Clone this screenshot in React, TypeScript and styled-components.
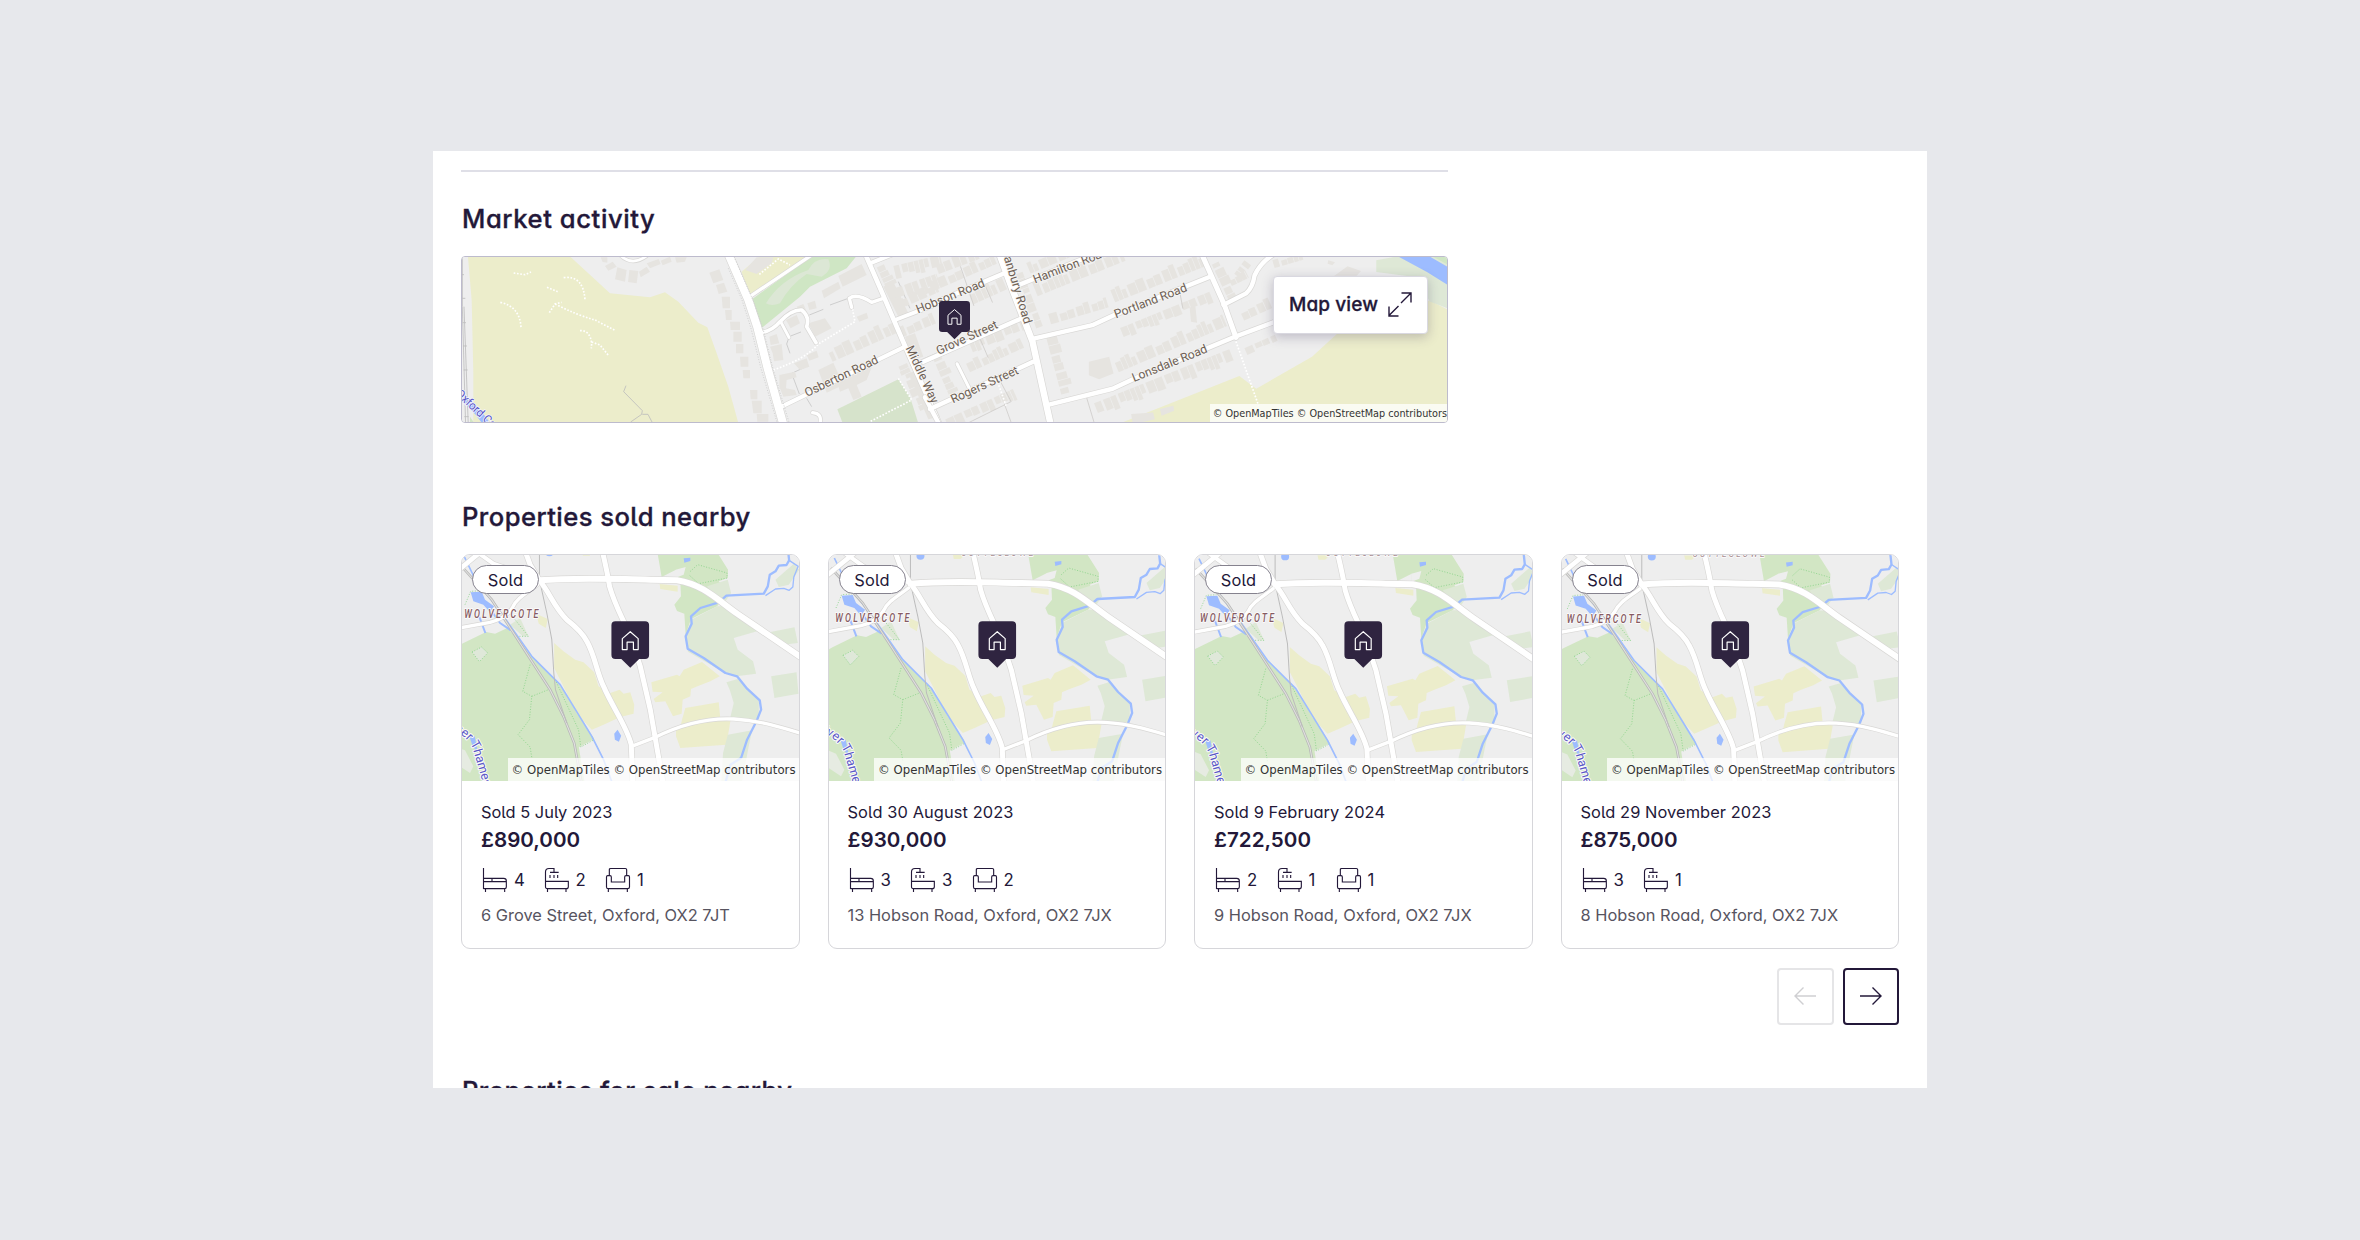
import React from "react";
import styled, { createGlobalStyle } from "styled-components";

const ink = "#231839";
const sans = `Inter, "Open Sans", "Liberation Sans", sans-serif`;

const GlobalStyle = createGlobalStyle`
  * { box-sizing: border-box; }
  body { margin: 0; background: #e7e8ec; }
`;

const Page = styled.main`
  width: 2360px;
  height: 1240px;
  padding-top: 151px;
  display: flex;
  justify-content: center;
  align-items: flex-start;
  background: #e7e8ec;
  color: ${ink};
  font-family: ${sans};
  font-feature-settings: "cv11" 1, "cv05" 1;
  overflow: hidden;
`;

const Panel = styled.div`
  width: 1494px;
  height: 937px;
  padding: 19px 28px 0;
  background: #fff;
  overflow: hidden;
  display: flex;
  flex-direction: column;
`;

const Divider = styled.hr`
  width: 987px;
  height: 2px;
  margin: 0;
  border: 0;
  flex: none;
  background: #dfdfe7;
`;

const Heading = styled.h2<{ $top: number; $track: number }>`
  margin: ${(p) => p.$top}px 0 0 1px;
  height: 36px;
  flex: none;
  font-size: 25.6px;
  line-height: 36px;
  font-weight: 500;
  letter-spacing: ${(p) => p.$track}px;
  -webkit-text-stroke: 0.35px ${ink};
  white-space: nowrap;
`;

const MapFrame = styled.div`
  position: relative;
  width: 987px;
  height: 167px;
  margin-top: 19px;
  flex: none;
  border: 1px solid #bdbbcd;
  border-radius: 4px;
  overflow: hidden;
`;

const MapDrawing = styled.svg`
  display: block;
  width: 100%;
  height: 100%;
`;

const MapButton = styled.button`
  position: absolute;
  top: 19px;
  right: 19px;
  width: 155px;
  height: 58px;
  padding: 0 15px 1px 15px;
  display: flex;
  align-items: center;
  justify-content: space-between;
  border: 1px solid #d9d8e0;
  border-radius: 4px;
  background: #fff;
  color: ${ink};
  font: 500 19px ${sans};
  font-feature-settings: inherit;
  letter-spacing: 0.1px;
  -webkit-text-stroke: 0.3px ${ink};
  white-space: nowrap;
  box-shadow: 0 3px 12px rgba(60, 50, 90, 0.28);
`;

const Attribution = styled.div<{ $large?: boolean }>`
  position: absolute;
  right: 0;
  bottom: 0;
  height: ${(p) => (p.$large ? 23 : 18)}px;
  padding: 0 ${(p) => (p.$large ? "3px 0 4px" : "0 0 3px")};
  line-height: ${(p) => (p.$large ? 25 : 19)}px;
  font-family: "DejaVu Sans", sans-serif;
  font-size: ${(p) => (p.$large ? 11.72 : 9.68)}px;
  color: #333;
  background: rgba(255, 255, 255, 0.75);
  white-space: nowrap;
`;

const CardRow = styled.div`
  display: grid;
  grid-template-columns: repeat(4, 338.5px);
  column-gap: 28px;
  margin-top: 19px;
  flex: none;
`;

const Card = styled.article`
  height: 395px;
  border: 1.4px solid #d6d6da;
  border-radius: 9px;
  overflow: hidden;
  background: #fff;
`;

const CardMap = styled.div`
  position: relative;
  height: 226px;
`;

const Badge = styled.span`
  position: absolute;
  left: 10px;
  top: 10px;
  width: 67px;
  height: 29px;
  border: 1px solid #85828e;
  border-radius: 15px;
  background: #fff;
  font-size: 16.4px;
  line-height: 28px;
  text-align: center;
  letter-spacing: 0.2px;
`;

const CardBody = styled.div`
  padding: 19px 19px 0;
  display: flex;
  flex-direction: column;
`;

const SoldDate = styled.p<{ $track: number }>`
  margin: 0;
  height: 25px;
  line-height: 25px;
  font-size: 16.4px;
  letter-spacing: ${(p) => p.$track}px;
  white-space: nowrap;
`;

const Price = styled.p`
  margin: 0;
  height: 30px;
  line-height: 30px;
  font-size: 20.6px;
  font-weight: 600;
`;

const Features = styled.ul`
  list-style: none;
  margin: 13px 0 0 2px;
  padding: 0;
  display: flex;
  gap: 20.5px;
  height: 25px;
`;

const Feature = styled.li`
  display: flex;
  gap: 7px;
  font-size: 16.8px;
  line-height: 25px;
`;

const Count = styled.span<{ $narrow: boolean }>`
  width: ${(p) => (p.$narrow ? 7.6 : 10)}px;
`;

const FeatureIcon = styled.svg`
  display: block;
  width: 24px;
  height: 24px;
  flex: none;
  overflow: visible;
`;

const Address = styled.p`
  margin: 10px 0 0;
  height: 25px;
  line-height: 25px;
  font-size: 16.4px;
  color: #57545f;
  white-space: nowrap;
`;

const Pager = styled.div`
  display: flex;
  justify-content: flex-end;
  gap: 9px;
  margin-top: 19px;
  flex: none;
`;

const PagerButton = styled.button<{ $off?: boolean }>`
  width: 56.5px;
  height: 56.5px;
  padding: 0;
  display: flex;
  align-items: center;
  justify-content: center;
  border: 2px solid ${(p) => (p.$off ? "#e5e5e7" : ink)};
  border-radius: 4px;
  background: #fff;
  color: ${(p) => (p.$off ? "#cfcfd2" : ink)};
`;

const C = {
  land: "#eeeeee",
  sand: "#ecedcb",
  park: "#d2e6c4",
  meadow: "#dee8d6",
  water: "#9dbcff",
  casing: "#d9d8d6",
  building: "#e6e4e0",
  rail: "#bdbdbd",
};

type Road = [string, number];

function Roads({ list }: { list: Road[] }) {
  return (
    <g fill="none" strokeLinejoin="round" strokeLinecap="round">
      {list.map(([d, w]) => (
        <path key={"c" + d} d={d} stroke={C.casing} strokeWidth={w + 4} />
      ))}
      {list.map(([d, w]) => (
        <path key={"f" + d} d={d} stroke="#fff" strokeWidth={w} />
      ))}
    </g>
  );
}

function Pin({ x, y, size }: { x: number; y: number; size: number }) {
  return (
    <g transform={`translate(${x} ${y}) scale(${size / 38})`}>
      <path
        d="M-15 0H15Q19 0 19 4V34Q19 38 15 38H9L0 47L-9 38H-15Q-19 38-19 34V4Q-19 0-15 0Z"
        fill="#2f2440"
      />
      <path
        d="M-8 17.5L0 10.5L8 17.5V28.5H3.2V21H-3.2V28.5H-8Z"
        fill="none"
        stroke="#fff"
        strokeWidth="1.2"
        strokeLinejoin="round"
      />
    </g>
  );
}

/* x1, y1, x2, y2, offset from the line (negative is above it), depth */
type Row = [number, number, number, number, number, number];

function Houses({ rows }: { rows: Row[] }) {
  const out: React.ReactNode[] = [];
  rows.forEach(([x1, y1, x2, y2, off, depth], r) => {
    const len = Math.hypot(x2 - x1, y2 - y1);
    const ang = (Math.atan2(y2 - y1, x2 - x1) * 180) / Math.PI;
    let t = 0;
    let i = 0;
    while (t < len) {
      const k = (i * 7 + r * 5) % 11;
      const w = 13 + (k % 4) * 4;
      const h = depth * (0.65 + (k % 5) * 0.09);
      out.push(
        <rect
          key={r + "-" + i}
          x={t}
          y={off < 0 ? off - h : off}
          width={Math.min(w, len - t)}
          height={h}
          transform={`translate(${x1} ${y1}) rotate(${ang})`}
        />
      );
      t += w + (k % 3 === 0 ? 7 : 2);
      i++;
    }
  });
  return <g fill={C.building}>{out}</g>;
}

function RoadName(p: { x: number; y: number; a: number; len: number; children: string }) {
  return (
    <text
      transform={`translate(${p.x} ${p.y}) rotate(${p.a})`}
      textLength={p.len}
      lengthAdjust="spacingAndGlyphs"
      fontFamily="Roboto, sans-serif"
      fontSize="12.2"
      fill="#6d5f55"
      stroke="#f6f5f3"
      strokeWidth="1.6"
      paintOrder="stroke"
    >
      {p.children}
    </text>
  );
}

const westRoads: Road[] = [
  ["M985 473L1175 345", 10],
  ["M1015 580Q1055 575 1080 545Q1115 508 1145 510Q1170 530 1160 560L1188 608", 11],
  ["M1082 545L1107 592", 9],
  ["M1350 370L1420 342", 12],
  ["M1425 540L1560 488", 12],
  ["M1390 475L1355 487Q1310 458 1288 475L1295 502", 10],
  ["M1080 802L1455 620", 12],
  ["M1500 668L1580 634", 12],
  ["M1178 818Q1207 820 1200 850", 10],
  ["M600 345Q635 380 680 348", 8],
  ["M1335 340L1385 455L1455 618L1560 855", 14],
  ["M922 335L985 480L1012 562L1042 682L1092 860", 24],
];

const eastRoads: Road[] = [
  ["M-20 200L225 96", 13],
  ["M250 138L560 12", 13],
  ["M300 293L480 252L545 222L830 108", 13],
  ["M355 486L540 440L600 412L900 287L1030 238", 13],
  ["M-20 360L275 230", 13],
  ["M0 500L305 360", 13],
  ["M80 366L116 438", 9],
  ["M868 192L935 158Q955 140 960 105Q978 65 1020 40", 13],
  ["M-15 465L35 560", 13],
  ["M803 40L870 190L905 288", 15],
  ["M203 35L245 150L303 300L360 560", 19],
];

function StreetMap() {
  return (
    <MapDrawing viewBox="462 257 985 165" preserveAspectRatio="none">
      <rect x="460" y="255" width="990" height="170" fill={C.land} />
      <g transform="translate(420 140) scale(.33333)">
        <path
          d="M143 340L440 340L570 460L690 472L735 457L775 485L835 548L862 562L890 640L925 740L958 860H160V700L155 480Z"
          fill={C.sand}
        />
        <path d="M965 395L1030 340H1180L985 468Z" fill={C.sand} />
        <path d="M975 390L1010 352H1060L1055 370L1010 402Z" fill={C.building} />
        <path d="M990 482L1180 345H1312L1280 385L1170 440L1140 470L1020 568Z" fill="#cfe6c4" />
        <path
          d="M1038 490Q1080 420 1165 390Q1185 352 1225 358Q1240 390 1205 410L1160 402Q1110 435 1080 490Q1055 500 1038 490Z"
          fill="#dce7d5"
        />
        <path d="M1252 808L1435 718L1470 770L1498 860H1272Z" fill="#d6e3cb" />
        <path d="M150 830L170 860H150Z" fill={C.park} />
        <path d="M130 775Q170 805 205 860" fill="none" stroke={C.water} strokeWidth="20" />
        <g fill="none" stroke={C.rail} strokeWidth="2.5">
          <path d="M127 350V500L137 860M132 500L145 860M126 404H132M127 475H136M128 548H138M129 618H141M131 690H143M133 830H146" />
          <path d="M618 737L611 755L667 812L665 823L632 846M667 823H684L697 848" />
          <path d="M1168 525L1210 508M1112 588L1143 576M1107 592L1100 612L1110 640M1435 425L1470 505M1230 495L1285 475M1138 762L1115 700L1152 683M1160 775L1175 800" strokeWidth="2" />
        </g>
        <g fill={C.building}>
          <path d="M592 382L620 390L615 425L585 418ZM628 390L655 393L650 430L624 426ZM657 395L680 380L690 395L662 412ZM680 370L716 357L722 372L690 385ZM722 362L750 350L755 365L728 376ZM555 378L578 365L590 380L565 392ZM542 352H562V368L548 366ZM765 352H800L795 365L770 368Z" />
          <path d="M868 398L898 388L910 420L880 430ZM888 435L912 428L922 455L896 462ZM905 470H930V505H908ZM915 510H935V540H918ZM930 545H960V570H932ZM940 575H965V605H940ZM948 612H970V640H948ZM960 650H985V680H962ZM968 690H990V715H970ZM990 750H1012V778H992ZM995 782H1025V820H1000ZM1010 822H1045V845H1012Z" />
          <path d="M1130 500L1150 492L1158 510L1140 520ZM1162 490L1185 482L1190 505L1168 510ZM1165 550L1215 535L1235 565L1185 590ZM1048 590L1070 582L1078 610L1052 615ZM1050 620L1085 612L1090 660L1062 664L1058 640ZM1098 540L1130 525L1140 550L1112 565ZM1205 452L1255 425L1262 445L1212 475ZM1255 408L1325 372L1340 405L1268 440ZM1310 530L1340 518L1345 535L1318 545Z" />
          <path d="M1078 705L1125 695L1130 712L1100 720L1098 745L1125 750L1130 765L1090 770L1078 740ZM1122 670L1160 655L1168 680L1140 690ZM1160 645L1190 632L1196 652L1168 662ZM1250 720L1360 670L1340 720L1310 735L1325 770L1300 780L1285 745L1260 755Z" />
          <path d="M1195 690L1240 668L1270 735L1220 758ZM1465 700L1495 690L1560 830L1525 838ZM1455 590L1485 580L1510 650L1475 660ZM1390 440L1420 425L1465 520L1435 530Z" />
        </g>
        <Houses
          rows={[
            [1240, 670, 1440, 580, -5, 45],
            [1365, 385, 1430, 530, -6, 36],
            [1400, 440, 1545, 390, 12, 40],
            [1445, 510, 1560, 460, -5, 35],
            [1420, 378, 1560, 345, 0, 40],
            [1440, 600, 1550, 555, -5, 35],
            [1470, 665, 1530, 800, 10, 30],
          ]}
        />
        <g fill="none" stroke="#fff" strokeWidth="5" strokeDasharray="5 5">
          <path d="M281 399L315 404L333 396M431 413Q490 405 495 480M381 442L413 455M241 487Q300 500 303 563M388 518L405 492L425 487M405 492Q470 525 525 540L585 571M480 572Q510 570 515 610L514 625M515 606L540 615L566 647" />
          <path d="M1018 403L1075 357L1110 375M1060 690Q1160 655 1195 612L1305 545L1297 505M1435 715L1475 780L1350 845" />
        </g>
        <Roads list={westRoads} />
        <path
          d="M942 350L1003 490L1030 570L1060 690L1108 850M925 385L966 480L993 565L1022 682L1072 850"
          fill="none"
          stroke="#cfcfcf"
          strokeWidth="3"
          strokeDasharray="3 5"
        />
      </g>
      <g transform="translate(930 240) scale(.33807)">
        <path d="M530 555L915 402L965 440L1130 345L1250 235L1400 180L1480 180L1540 210V560Z" fill={C.sand} />
        <path d="M1320 60L1400 45H1540V205L1478 182L1440 110L1320 95Z" fill={C.meadow} />
        <path d="M1378 45L1480 50L1540 85V138L1470 95Z" fill={C.water} />
        <path d="M1480 45H1540V78Z" fill="#cfe6c4" />
        <Houses
          rows={[
            [-10, 165, 200, 75, -5, 34],
            [130, 195, 230, 150, -5, 45],
            [30, 110, 150, 65, -10, 40],
            [300, 105, 420, 55, -6, 34],
            [320, 170, 580, 65, -4, 44],
            [360, 255, 530, 205, -6, 34],
            [550, 190, 820, 82, -6, 42],
            [560, 255, 830, 145, 6, 34],
            [340, 290, 385, 460, -4, 38],
            [560, 395, 880, 258, -4, 40],
            [480, 470, 880, 310, 14, 42],
            [830, 75, 885, 190, -4, 34],
            [895, 140, 945, 115, -4, 26],
            [930, 240, 1020, 200, -2, 34],
            [900, 100, 930, 60, 0, 30],
            [1020, 85, 1105, 60, -2, 24],
            [930, 320, 1020, 280, 0, 24],
            [110, 290, 270, 225, 14, 34],
            [120, 395, 280, 322, -4, 34],
            [40, 520, 240, 430, 12, 34],
            [285, 90, 345, 250, 12, 28],
            [0, 345, 50, 460, -6, 34],
          ]}
        />
        <g fill={C.building}>
          <path d="M470 360L530 345L543 395L500 412L470 400ZM768 200L785 195L790 245L772 242Z" />
          <path d="M595 515L660 510L665 530L600 545ZM680 500L720 490L722 505L685 520Z" />
          <path d="M1178 60L1198 66L1190 75L1176 70ZM1190 110L1235 78L1275 92L1262 106H1200Z" />
        </g>
        <g fill="none" stroke="#cfcdcb" strokeWidth="2.5">
          <path d="M90 78L130 195M155 115L185 185M740 160L748 203M462 462L487 545M145 285L172 348M205 412L240 478L105 545M220 485L242 545" />
        </g>
        <g fill="none" stroke="#fff" strokeWidth="5" strokeDasharray="5 5">
          <path d="M905 300L972 490M200 420L225 490" />
        </g>
        <Roads list={eastRoads} />
      </g>
      <RoadName x={918} y={313.5} a={-22} len={73}>Hobson Road</RoadName>
      <RoadName x={1035} y={283.5} a={-21} len={79}>Hamilton Road</RoadName>
      <RoadName x={1116} y={318.5} a={-21} len={77}>Portland Road</RoadName>
      <RoadName x={1134} y={382} a={-22} len={80}>Lonsdale Road</RoadName>
      <RoadName x={938.5} y={355} a={-24.5} len={66}>Grove Street</RoadName>
      <RoadName x={953} y={403.5} a={-24.5} len={73}>Rogers Street</RoadName>
      <RoadName x={807} y={397} a={-25.5} len={80}>Osberton Road</RoadName>
      <RoadName x={905.5} y={348} a={65} len={62}>Middle Way</RoadName>
      <RoadName x={1001.5} y={250} a={73} len={78}>Banbury Road</RoadName>
      <text
        transform="translate(455 394.5) rotate(43)"
        textLength="66"
        lengthAdjust="spacingAndGlyphs"
        fontFamily="Roboto, sans-serif"
        fontSize="12"
        fill="#5553c4"
        stroke="#f4f4ff"
        strokeWidth="1.6"
        paintOrder="stroke"
      >
        Oxford Canal
      </text>
      <Pin x={954.5} y={301} size={31} />
    </MapDrawing>
  );
}

const townRoads: Road[] = [
  ["M0 262L110 172", 14],
  ["M60 172L130 222L268 270", 12],
  ["M262 285C230 310 200 325 188 352Q170 385 120 398L0 420", 10],
  ["M550 768L612 744C700 700 780 684 850 688C930 692 1000 715 1080 740", 10],
  ["M220 170L240 225L268 272C300 310 310 350 350 390Q395 425 410 455C435 500 440 550 460 590C485 650 530 710 543 765L548 890", 15],
  ["M453 170C465 220 472 250 478 290C495 350 520 390 540 440L570 530L600 660L640 890", 15],
  ["M268 272C380 262 480 268 600 270L680 272C760 285 800 330 860 372L1080 522", 18],
];

function TownMap({ dx, dy }: { dx: number; dy: number }) {
  const id = `thames-${dx}`;
  return (
    <MapDrawing viewBox="36 196 1008 678" preserveAspectRatio="none">
      <rect x="30" y="190" width="1020" height="690" fill={C.land} />
      <g transform={`translate(${dx} ${dy})`}>
        <path
          d="M-20 492L36 462L108 427L135 432L172 415L200 445L250 508L320 575L345 610L432 748L386 773L405 890H-20Z"
          fill={C.park}
        />
        <path d="M66 487L95 472L113 490L88 516Z" fill="#dfe8d9" />
        <path d="M15 770L45 782L70 830L60 850L15 820Z" fill="#e6ebe2" />
        <path d="M180 405L210 385L235 440L218 440Z" fill={C.meadow} />
        <path
          d="M312 460L340 485L375 510L400 518L432 548L445 590L480 610L508 600L520 612L540 608L552 645L550 672L510 682L460 705L425 720L380 672L345 600L312 535Z"
          fill={C.sand}
        />
        <path d="M258 372L293 388L287 415L266 402ZM628 283L682 288V306L630 298ZM395 185H432L418 198H398Z" fill={C.sand} />
        <path
          d="M603 578L680 555L688 560L700 540L755 517L808 560L780 575L745 588L722 598L720 620L697 630L694 672L668 680L645 635L615 638L610 628L637 608L607 606Z"
          fill={C.sand}
        />
        <path d="M705 655L805 638L810 688L840 695L828 765L690 775L677 740V715L690 712L695 690Z" fill={C.sand} />
        <path
          d="M620 180H795L833 240L832 265L805 275L832 310L800 350L722 388L706 435L702 372L680 364L672 345L692 320L690 275L677 262V240L634 262Z"
          fill={C.park}
        />
        <path d="M676 240L706 232L700 255L676 264Z" fill={C.land} />
        <path d="M770 290L832 270L842 310L815 350Z" fill={C.meadow} />
        <path
          d="M722 390L800 350L835 350L930 422L850 445L862 480L908 515L917 552L858 560L820 548L713 486L706 445Z"
          fill={C.meadow}
        />
        <path d="M962 560L1038 548L1044 612L972 625ZM945 430L1032 413L1042 460L1010 464ZM828 578L862 568L925 632L925 688L838 690L850 640L838 600ZM832 735L905 722L895 770L872 890H812L818 790Z" fill={C.meadow} />
        <path d="M975 270L1030 222L1046 240L1015 285L985 292Z" fill={C.meadow} />
        <g fill="none" stroke="#86d386" strokeWidth="2.5" strokeDasharray="3 5">
          <path d="M240 525L218 605L245 620L238 690L204 735L240 772L245 803M245 620L300 598M315 570L385 720L392 772L432 750M66 487L95 472L113 490L88 516ZM195 390L235 440L205 440M720 245L742 225L830 250V265L745 282L715 255M45 345L62 305L92 303" />
        </g>
        <g fill={C.water}>
          <path d="M62 308L95 306L105 330L132 350L120 368L100 345L70 335ZM492 732L502 720L513 738L506 756L494 750ZM700 206L720 204V214L702 219Z" />
          <ellipse cx="298" cy="189" rx="12" ry="11" />
          <path d="M58 740L74 740L84 790L68 770Z" />
        </g>
        <g fill="none" stroke={C.water} strokeLinejoin="round">
          <path
            d="M1012 175L1016 212L1008 226L985 228L975 245L958 255L952 290L940 312L828 318L805 338L750 355L722 380L724 402L706 440L712 477L760 505L825 550L860 560L890 597L928 632L932 660L918 695L890 750L872 805L840 825L822 890"
            strokeWidth="7"
          />
          <path d="M1016 212L1043 230L1030 262L1027 292L1016 302L1000 296L975 298L945 318" strokeWidth="4" />
          <path d="M40 195L75 268L150 365L245 500L330 585L425 740L460 810L490 890" strokeWidth="5" />
          <path d="M125 365L150 400L182 422M88 382L106 430" strokeWidth="6" />
        </g>
        <g fill="none">
          <path d="M30 225L125 330L200 445L300 600L340 680L372 760L396 890" stroke="#b9b9b9" strokeWidth="8" />
          <path d="M30 225L125 330L200 445L300 600L340 680L372 760L396 890" stroke="#e2e2e0" strokeWidth="3" />
          <path d="M268 175V270L290 370L305 450L311 550L316 600L350 700" stroke="#bcbcbc" strokeWidth="3" />
        </g>
        <Roads list={townRoads} />
        <g fontFamily="Roboto, sans-serif" paintOrder="stroke" stroke="#fbfafa" strokeWidth="6" strokeLinejoin="round">
          <g transform="translate(43 386) scale(.74 1)">
            <text fontSize="36" fontStyle="italic" fontWeight="500" fill="#865a62" textLength="300">WOLVERCOTE</text>
          </g>
          {dy > 0 && (
            <g transform="translate(420 188) scale(.74 1)">
              <text fontSize="34" fontStyle="italic" fill="#a98f93" textLength="292">CUTTESLOWE</text>
            </g>
          )}
          <path id={id} d="M-48 690L20 728Q52 744 68 775L114 935" fill="none" stroke="none" />
          <text fontSize="38" fill="#5a58c6">
            <textPath href={`#${id}`} startOffset="38">River Thames</textPath>
          </text>
        </g>
      </g>
      <g transform="translate(540 395) scale(3)">
        <Pin x={0} y={0} size={37.6} />
      </g>
    </MapDrawing>
  );
}

const glyphs = {
  bed: "M1.5 0V63M1.5 31H62Q70 31 70 39V57Q70 62 65 62H1.5M1.5 41H70M27 31V41M7.5 63V72M65 63V72",
  bath: "M1.5 40V12Q1.5 1.5 12 1.5H27V12M15 13H41M15 21V30M27 21V30M38 21V30M1.5 40H70V56Q70 62 64 62H7.5Q1.5 62 1.5 56ZM7.5 63V72M63 63V72",
  sofa: "M10 23V5Q10 1.5 14 1.5H58Q62 1.5 62 5V23M5 23H12Q16 23 16 27V42H56V27Q56 23 60 23H67Q70.5 23 70.5 27V57Q70.5 62 65 62H7Q1.5 62 1.5 57V27Q1.5 23 5 23ZM7 63V72M64 63V72",
};

function Stat({ kind, value }: { kind: keyof typeof glyphs; value: number }) {
  return (
    <Feature>
      <FeatureIcon viewBox="0 0 72 72">
        <path d={glyphs[kind]} fill="none" stroke={ink} strokeWidth="3.4" />
      </FeatureIcon>
      <Count $narrow={value === 1}>{value}</Count>
    </Feature>
  );
}

const sold = [
  { date: "Sold 5 July 2023", price: "£890,000", beds: 4, baths: 2, sofas: 1, address: "6 Grove Street, Oxford, OX2 7JT", dx: 0, dy: 0, track: 0 },
  { date: "Sold 30 August 2023", price: "£930,000", beds: 3, baths: 3, sofas: 2, address: "13 Hobson Road, Oxford, OX2 7JX", dx: 12, dy: 10, track: 0.1 },
  { date: "Sold 9 February 2024", price: "£722,500", beds: 2, baths: 1, sofas: 1, address: "9 Hobson Road, Oxford, OX2 7JX", dx: 8, dy: 12, track: 0.08 },
  { date: "Sold 29 November 2023", price: "£875,000", beds: 3, baths: 1, sofas: 0, address: "8 Hobson Road, Oxford, OX2 7JX", dx: 7, dy: 12.5, track: 0.07 },
];

const credit = "© OpenMapTiles © OpenStreetMap contributors";

export default function App() {
  return (
    <Page>
      <GlobalStyle />
      <Panel>
        <Divider />
        <Heading $top={29} $track={0.58}>Market activity</Heading>
        <MapFrame>
          <StreetMap />
          <MapButton>
            Map view
            <svg width="24" height="25" viewBox="0 0 24 25" fill="none" stroke={ink} strokeWidth="1.4">
              <path d="M13 11L23 1M13.5 1H23V10.5M10.5 14L1 23.5M1 14.5V24H10.5" />
            </svg>
          </MapButton>
          <Attribution>{credit}</Attribution>
        </MapFrame>
        <Heading $top={76} $track={0.45}>Properties sold nearby</Heading>
        <CardRow>
          {sold.map((s) => (
            <Card key={s.address}>
              <CardMap>
                <TownMap dx={s.dx} dy={s.dy} />
                <Badge>Sold</Badge>
                <Attribution $large>{credit}</Attribution>
              </CardMap>
              <CardBody>
                <SoldDate $track={s.track}>{s.date}</SoldDate>
                <Price>{s.price}</Price>
                <Features>
                  <Stat kind="bed" value={s.beds} />
                  <Stat kind="bath" value={s.baths} />
                  {s.sofas > 0 && <Stat kind="sofa" value={s.sofas} />}
                </Features>
                <Address>{s.address}</Address>
              </CardBody>
            </Card>
          ))}
        </CardRow>
        <Pager>
          <PagerButton $off aria-label="Previous">
            <svg width="22" height="18" viewBox="0 0 22 18" fill="none" stroke="currentColor" strokeWidth="1.4">
              <path d="M22 9H1M9.5 .5L1 9L9.5 17.5" />
            </svg>
          </PagerButton>
          <PagerButton aria-label="Next">
            <svg width="22" height="18" viewBox="0 0 22 18" fill="none" stroke="currentColor" strokeWidth="1.4">
              <path d="M0 9H21M12.5 .5L21 9L12.5 17.5" />
            </svg>
          </PagerButton>
        </Pager>
        <Heading $top={48} $track={0.42}>Properties for sale nearby</Heading>
      </Panel>
    </Page>
  );
}
